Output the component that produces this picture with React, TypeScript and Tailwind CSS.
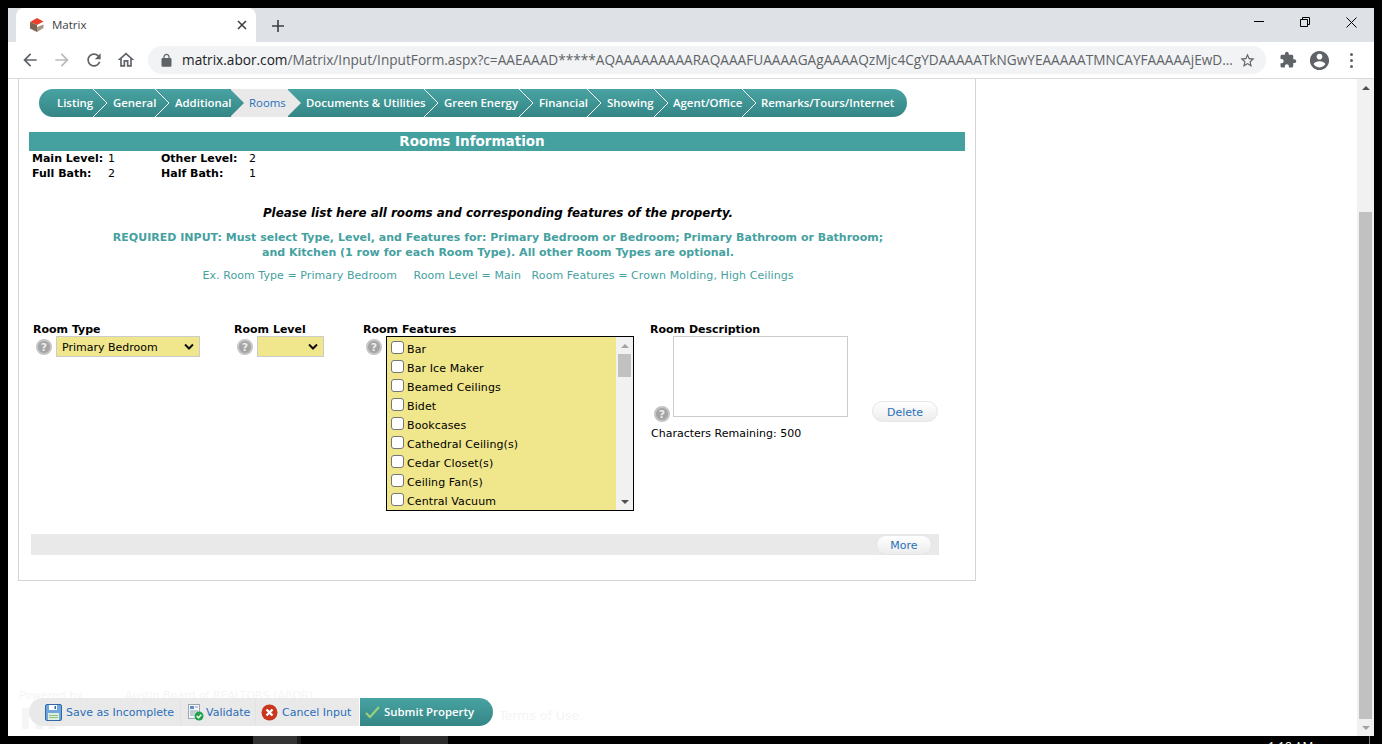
import React from "react";

const steps = [
  { label: "Listing", w: "w-[55px] pl-[18px]", first: true },
  { label: "General", w: "w-[62px] pl-[19px]" },
  { label: "Additional", w: "w-[75px] pl-[19px]" },
  { label: "Rooms", w: "w-[57px] pl-[18px] font-normal", active: true },
  { label: "Documents & Utilities", w: "w-[137px] pl-[18px]" },
  { label: "Green Energy", w: "w-[95px] pl-[19px]" },
  { label: "Financial", w: "w-[68px] pl-[19px]" },
  { label: "Showing", w: "w-[67px] pl-[19px]" },
  { label: "Agent/Office", w: "w-[88px] pl-[18px]" },
  { label: "Remarks/Tours/Internet", w: "w-[164px] pl-[18px]", last: true },
];

const features = [
  "Bar",
  "Bar Ice Maker",
  "Beamed Ceilings",
  "Bidet",
  "Bookcases",
  "Cathedral Ceiling(s)",
  "Cedar Closet(s)",
  "Ceiling Fan(s)",
  "Central Vacuum",
];

const Help = () => (
  <span className="flex h-4 w-4 flex-none items-center justify-center rounded-full border-2 border-[#c4c4c4] bg-[#a4a4a4] text-[11px] leading-none font-bold text-[#ececec]">
    ?
  </span>
);

const Arrow = () => (
  <svg width="12" height="8" viewBox="0 0 12 8" className="flex-none">
    <path d="M2 1.5 6 5.5 10 1.5" fill="none" stroke="#111" strokeWidth="2" />
  </svg>
);

const Icon = ({ d, size = 24, fill = "#5f6368" }: { d: string; size?: number; fill?: string }) => (
  <svg width={size} height={size} viewBox="0 0 24 24" className="flex-none">
    <path d={d} fill={fill} />
  </svg>
);

// point of a step, sits over the start of the next step
const Chevron = ({ active, outline }: { active?: boolean; outline?: boolean }) => (
  <svg width="15" height="28" viewBox="0 0 15 28" className="absolute top-0 -right-[14px] z-10">
    <defs>
      <linearGradient id="stepFill" x1="0" y1="0" x2="0" y2="1">
        <stop offset="0" stopColor="#48a3a2" />
        <stop offset="1" stopColor="#348685" />
      </linearGradient>
    </defs>
    <path d="M0 0 14 14 0 28Z" fill={active ? "#e9e9e9" : "url(#stepFill)"} />
    {outline && <path d="M0 0 14 14 0 28" fill="none" stroke="#ffffff" strokeWidth="1" />}
  </svg>
);

const Steps = () => (
  <div className="ml-[10px] flex h-7 w-[868px] font-['Open_Sans',sans-serif] text-[11.4px] font-semibold">
    {steps.map((s, i) => {
      const next = steps[i + 1];
      return (
        <div
          key={s.label}
          className={`relative flex h-7 flex-none items-center whitespace-nowrap ${s.w} ${
            s.active
              ? "bg-[#e9e9e9] text-[#2a6ebb]"
              : "bg-gradient-to-b from-[#48a3a2] to-[#348685] text-white"
          } ${s.first ? "rounded-l-full" : ""} ${s.last ? "rounded-r-full" : ""}`}
        >
          <span className="relative z-20">{s.label}</span>
          {s.active && <Chevron active />}
          {next?.active && <Chevron />}
          {!s.active && !next?.active && !s.last && <Chevron outline />}
        </div>
      );
    })}
  </div>
);

const PillButton = ({ label, className }: { label: string; className: string }) => (
  <button
    className={`flex items-center justify-center rounded-full border border-[#e6e6e6] bg-gradient-to-b from-white to-[#ececec] text-[11px] text-[#2a6ebb] ${className}`}
  >
    {label}
  </button>
);

const RoomForm = () => (
  <div className="mt-[41px] flex text-[11px] leading-none text-black">
    <div className="ml-[4px] w-[201px]">
      <div className="h-[12px] font-bold">Room Type</div>
      <div className="flex items-center gap-1 pl-[3px]">
        <div className="mt-[1px]">
          <Help />
        </div>
        <div className="flex h-[21px] w-[144px] items-center justify-between border border-[#cccccc] bg-[#f0e68c] pr-[4px] pl-[5px]">
          <span className="pt-[1px]">Primary Bedroom</span>
          <Arrow />
        </div>
      </div>
    </div>
    <div className="w-[129px]">
      <div className="h-[12px] font-bold">Room Level</div>
      <div className="flex items-center gap-1 pl-[3px]">
        <div className="mt-[1px]">
          <Help />
        </div>
        <div className="flex h-[21px] w-[67px] items-center justify-end border border-[#cccccc] bg-[#f0e68c] pr-[4px]">
          <Arrow />
        </div>
      </div>
    </div>
    <div className="w-[287px]">
      <div className="h-[12px] font-bold">Room Features</div>
      <div className="flex items-start gap-1 pl-[3px]">
        <div className="mt-[3px]">
          <Help />
        </div>
        <div className="flex h-[175px] w-[248px] border border-black bg-[#f0e68c]">
          <div className="flex-1 pt-[3px] pl-[4px]">
            {features.map((f) => (
              <div key={f} className="flex h-[19px] items-center">
                <span className="mb-[4px] h-[13px] w-[13px] flex-none rounded-[3px] border border-[#767676] bg-white" />
                <span className="ml-[3px] tracking-[0.1px]">{f}</span>
              </div>
            ))}
          </div>
          <div className="relative w-[17px] bg-[#f1f1f1]">
            <div className="flex h-[17px] items-center justify-center">
              <div className="h-0 w-0 border-x-[4px] border-b-[4px] border-x-transparent border-b-[#a3a3a3]" />
            </div>
            <div className="mx-[2px] h-[23px] bg-[#c1c1c1]" />
            <div className="absolute bottom-0 flex h-[17px] w-full items-center justify-center">
              <div className="h-0 w-0 border-x-[4px] border-t-[4px] border-x-transparent border-t-[#505050]" />
            </div>
          </div>
        </div>
      </div>
    </div>
    <div className="relative w-[288px]">
      <div className="h-[12px] font-bold">Room Description</div>
      <div className="flex items-end">
        <div className="mb-[-5px] ml-[4px] w-[19px]">
          <Help />
        </div>
        <div className="h-[81px] w-[175px] border border-[#cccccc] bg-white" />
        <PillButton label="Delete" className="mb-[-5px] ml-[24px] h-[21px] w-[66px] pt-[1px]" />
      </div>
      <div className="mt-[11px] ml-[1px]">Characters Remaining: 500</div>
    </div>
  </div>
);

const Panel = () => (
  <div className="ml-[10px] h-[502px] w-[958px] border-x border-b border-[#d5d5d5] pt-[10px] pl-[10px] font-['DejaVu_Sans',sans-serif]">
    <Steps />
    <div className="mt-[15px] flex h-[19px] w-[936px] items-center justify-center bg-[#45a1a0] pr-[50px] text-[13.5px] font-bold text-white">
      Rooms Information
    </div>
    <div className="ml-[3px] grid w-[260px] grid-cols-[76px_53px_88px_1fr] text-[11px] leading-[15px] text-black">
      <span className="font-bold">Main Level:</span>
      <span>1</span>
      <span className="font-bold">Other Level:</span>
      <span>2</span>
      <span className="font-bold">Full Bath:</span>
      <span>2</span>
      <span className="font-bold">Half Bath:</span>
      <span>1</span>
    </div>
    <div className="mt-[24px] w-[938px] text-center">
      <p className="text-[11.9px] leading-[16px] font-bold text-black italic">
        Please list here all rooms and corresponding features of the property.
      </p>
      <p className="mt-[9px] text-[11px] leading-[15px] font-bold tracking-[0.01px] text-[#45a1a0]">
        REQUIRED INPUT: Must select Type, Level, and Features for: Primary Bedroom or Bedroom; Primary Bathroom or Bathroom;
        <br />
        and Kitchen (1 row for each Room Type). All other Room Types are optional.
      </p>
      <p className="mt-[8px] text-[11px] leading-[15px] tracking-[0.07px] whitespace-pre text-[#45a1a0]">
        {"Ex. Room Type = Primary Bedroom    "}
        <span className="ml-[2px]">{"Room Level = Main   Room Features = Crown Molding, High Ceilings"}</span>
      </p>
    </div>
    <RoomForm />
    <div className="mt-[23px] ml-[2px] flex h-[21px] w-[908px] items-start justify-end bg-[#e9e9e9] pt-[1px] pr-[7px]">
      <PillButton label="More" className="h-[20px] w-[56px] pt-[2px]" />
    </div>
  </div>
);

const ActionBar = () => (
  <div className="absolute bottom-[10px] left-[21px] flex h-7 font-['DejaVu_Sans',sans-serif] text-[11px] text-[#2a6ebb]">
    <div className="flex items-center rounded-l-full bg-[#e9e9e9]">
      <div className="flex h-7 w-[152px] items-center gap-[4px] border-r border-[#e2e2e2] pl-[16px]">
        <svg width="17" height="17" viewBox="0 0 17 17" className="flex-none">
          <rect x="0.5" y="0.5" width="16" height="16" rx="1.5" fill="#6fa6dc" stroke="#2f67a8" />
          <rect x="4" y="1" width="8" height="5" fill="#ffffff" />
          <rect x="9.5" y="2" width="1.5" height="3" fill="#2f67a8" />
          <rect x="3" y="9" width="11" height="7" fill="#dfeedd" />
          <rect x="4" y="11" width="9" height="1" fill="#8cc084" />
          <rect x="4" y="13" width="9" height="1" fill="#8cc084" />
        </svg>
        <span className="pt-[2px] whitespace-nowrap">Save as Incomplete</span>
      </div>
      <div className="flex h-7 w-[75px] items-center gap-[2px] border-r border-[#e2e2e2] pl-[6px]">
        <svg width="17" height="18" viewBox="0 0 17 18" className="flex-none">
          <rect x="1.5" y="1.5" width="11" height="14" fill="#f4f6f8" stroke="#9aa7b3" />
          <rect x="3" y="3" width="4" height="3" fill="#5c8fc4" />
          <path d="M8 4h3M3 8h8M3 10h5M3 12h4" stroke="#8fa0b0" />
          <circle cx="12" cy="13" r="4.5" fill="#22a34a" />
          <path d="M9.8 13l1.7 1.7 2.8-3" stroke="#fff" strokeWidth="1.4" fill="none" />
        </svg>
        <span className="pt-[2px]">Validate</span>
      </div>
      <div className="flex h-7 w-[103px] items-center gap-[4px] pl-[5px]">
        <svg width="17" height="17" viewBox="0 0 17 17" className="flex-none">
          <circle cx="8.5" cy="8.5" r="8" fill="#c9371f" />
          <path d="M5.5 5.5l6 6M11.5 5.5l-6 6" stroke="#fff" strokeWidth="2.4" />
        </svg>
        <span className="pt-[2px] whitespace-nowrap">Cancel Input</span>
      </div>
    </div>
    <div className="flex w-[134px] items-center gap-[4px] rounded-r-full border-l border-white bg-gradient-to-b from-[#48a3a2] to-[#348685] pl-[5px] font-['Open_Sans',sans-serif] text-[11.4px] font-semibold text-white">
      <svg width="15" height="13" viewBox="0 0 15 13" className="flex-none">
        <path d="M1 7l4 4 9-10" stroke="#9fd07c" strokeWidth="2" fill="none" />
      </svg>
      <span className="whitespace-nowrap">Submit Property</span>
    </div>
  </div>
);

const Toolbar = () => (
  <div className="flex h-[37px] items-center border-b border-[#d9d9d9] bg-white font-['Open_Sans',sans-serif]">
    <div className="ml-[12px] flex w-[128px] items-center">
      <div className="w-[32px]">
        <Icon size={20} d="M20 11H7.83l5.59-5.59L12 4l-8 8 8 8 1.41-1.41L7.83 13H20v-2z" />
      </div>
      <div className="w-[32px]">
        <Icon size={20} fill="#b8babd" d="M12 4l-1.41 1.41L16.17 11H4v2h12.17l-5.58 5.59L12 20l8-8z" />
      </div>
      <div className="w-[32px]">
        <Icon size={20} d="M17.65 6.35C16.2 4.9 14.21 4 12 4c-4.42 0-7.99 3.58-7.99 8s3.57 8 7.99 8c3.73 0 6.84-2.55 7.73-6h-2.08c-.82 2.33-3.04 4-5.65 4-3.31 0-6-2.69-6-6s2.69-6 6-6c1.66 0 3.14.69 4.22 1.78L13 11h7V4l-2.35 2.35z" />
      </div>
      <Icon size={20} d="M12 5.69l5 4.5V18h-2v-6H9v6H7v-7.81l5-4.5M12 3L2 12h3v8h6v-6h2v6h6v-8h3L12 3z" />
    </div>
    <div className="flex h-7 w-[1118px] items-center rounded-full bg-[#f1f3f4] pr-[10px] pl-[11px]">
      <Icon size={15} d="M18 8h-1V6c0-2.76-2.24-5-5-5S7 3.24 7 6v2H6c-1.1 0-2 .9-2 2v10c0 1.1.9 2 2 2h12c1.1 0 2-.9 2-2V10c0-1.1-.9-2-2-2zM9 6c0-1.66 1.34-3 3-3s3 1.34 3 3v2H9V6z" />
      <span className="ml-[8px] flex-1 overflow-hidden text-[13.65px] whitespace-nowrap text-[#5f6368]">
        <span className="text-[#202124]">matrix.abor.com</span>
        /Matrix/Input/InputForm.aspx?c=AAEAAAD*****AQAAAAAAAAARAQAAAFUAAAAGAgAAAAQzMjc4CgYDAAAAATkNGwYEAAAAATMNCAYFAAAAAjEwD...
      </span>
      <Icon size={17} d="M22 9.24l-7.19-.62L12 2 9.19 8.63 2 9.24l5.46 4.73L5.82 21 12 17.27 18.18 21l-1.63-7.03L22 9.24zM12 15.4l-3.76 2.27 1-4.28-3.32-2.88 4.38-.38L12 6.1l1.71 4.04 4.38.38-3.32 2.88 1 4.28L12 15.4z" />
    </div>
    <div className="ml-[13px] flex items-center">
      <div className="w-[29px]">
        <Icon size={18} d="M20.5 11H19V7c0-1.1-.9-2-2-2h-4V3.5C13 2.12 11.88 1 10.5 1S8 2.12 8 3.5V5H4c-1.1 0-1.99.9-1.99 2v3.8H3.5c1.49 0 2.7 1.21 2.7 2.7s-1.21 2.7-2.7 2.7H2V20c0 1.1.9 2 2 2h3.8v-1.5c0-1.49 1.21-2.7 2.7-2.7 1.49 0 2.7 1.21 2.7 2.7V22H17c1.1 0 2-.9 2-2v-4h1.5c1.38 0 2.5-1.12 2.5-2.5S21.88 11 20.5 11z" />
      </div>
      <div className="w-[32px]">
        <Icon size={23} d="M12 2C6.48 2 2 6.48 2 12s4.48 10 10 10 10-4.48 10-10S17.52 2 12 2zm0 3c1.66 0 3 1.34 3 3s-1.34 3-3 3-3-1.34-3-3 1.34-3 3-3zm0 14.2c-2.5 0-4.71-1.28-6-3.22.03-1.99 4-3.08 6-3.08 1.99 0 5.97 1.09 6 3.08-1.29 1.94-3.5 3.22-6 3.22z" />
      </div>
      <div className="ml-[10px] flex flex-col gap-[3px]">
        <span className="h-[3px] w-[3px] rounded-full bg-[#5f6368]" />
        <span className="h-[3px] w-[3px] rounded-full bg-[#5f6368]" />
        <span className="h-[3px] w-[3px] rounded-full bg-[#5f6368]" />
      </div>
    </div>
  </div>
);

const TabStrip = () => (
  <div className="flex h-[34px] items-end bg-[#dee1e6] font-['Open_Sans',sans-serif]">
    <div className="ml-[8px] flex h-[34px] w-[240px] items-center rounded-t-[8px] bg-white pr-[9px] pl-[13px]">
      <svg width="16" height="16" viewBox="0 0 16 16" className="flex-none">
        <path d="M1 5 8 1l6.5 3.5L8 8Z" fill="#e8402a" />
        <path d="M1 5l7 3v7l-7-3.5Z" fill="#7d6352" />
        <path d="M8 10l6.5-2.5v3.5L8 15Z" fill="#a89786" />
      </svg>
      <span className="ml-[7px] flex-1 text-[11.5px] text-[#3c4043]">Matrix</span>
      <svg width="10" height="10" viewBox="0 0 10 10" className="flex-none">
        <path d="M1 1l8 8M9 1l-8 8" stroke="#3c4043" strokeWidth="1.6" />
      </svg>
    </div>
    <div className="mb-[10px] ml-[16px]">
      <svg width="12" height="12" viewBox="0 0 12 12">
        <path d="M6 0v12M0 6h12" stroke="#3c4043" strokeWidth="1.6" />
      </svg>
    </div>
    <div className="ml-auto flex h-[34px] items-start pt-[9px]">
      <div className="flex w-[46px] justify-center pt-[4px]">
        <div className="h-px w-[10px] bg-black" />
      </div>
      <div className="flex w-[46px] justify-center">
        <svg width="10" height="10" viewBox="0 0 10 10">
          <path d="M0.5 2.5h7v7h-7zM2.5 2.5v-2h7v7h-2" fill="none" stroke="#000" />
        </svg>
      </div>
      <div className="flex w-[46px] justify-center">
        <svg width="11" height="11" viewBox="0 0 11 11">
          <path d="M0.5 0.5l10 10M10.5 0.5l-10 10" stroke="#000" />
        </svg>
      </div>
    </div>
  </div>
);

const PageScrollbar = () => (
  <div className="relative w-[17px] flex-none bg-[#f1f1f1]">
    <div className="flex h-[17px] items-center justify-center">
      <div className="h-0 w-0 border-x-[4px] border-b-[4px] border-x-transparent border-b-[#505050]" />
    </div>
    <div className="absolute top-[133px] right-[2px] bottom-[17px] left-[2px] bg-[#c1c1c1]" />
    <div className="absolute bottom-0 flex h-[17px] w-full items-center justify-center">
      <div className="h-0 w-0 border-x-[4px] border-t-[4px] border-x-transparent border-t-[#a3a3a3]" />
    </div>
  </div>
);

// nearly invisible page footer, the action bar lies over most of it
const Footer = () => (
  <div className="mt-[108px] ml-[11px] font-['DejaVu_Sans',sans-serif] text-[#f5f5f5]">
    <div className="flex h-[14px] items-center text-[11px]">
      <span className="w-[106px]">Powered by</span>
      <span>Austin Board of REALTORS (ABOR)</span>
    </div>
    <div className="flex h-[26px] items-end">
      <span className="w-[480px] text-[38px] leading-[26px] font-bold">m</span>
      <span className="mb-[5px] text-[12.5px] leading-4">Terms of Use.</span>
    </div>
  </div>
);

export default function App() {
  return (
    <div className="relative h-[744px] w-[1382px] overflow-hidden bg-black p-2">
      <div className="flex h-[728px] flex-col">
        <TabStrip />
        <Toolbar />
        <div className="relative flex flex-1 bg-white">
          <div className="flex-1">
            <Panel />
            <Footer />
            <ActionBar />
          </div>
          <PageScrollbar />
        </div>
      </div>
      <div className="absolute top-[736px] left-[253px] h-2 w-[44px] bg-[#333333]" />
      <div className="absolute top-[736px] left-[297px] h-2 w-[4px] bg-[#1a1a1a]" />
      <div className="absolute top-[736px] left-[400px] h-2 w-[48px] bg-[#2b2b2b]" />
      <div className="absolute top-[736px] left-[1369px] h-2 w-px bg-[#777777]" />
      <div className="absolute top-[739px] left-[1268px] font-['Open_Sans',sans-serif] text-[12px] leading-4 text-white">
        1:18 AM
      </div>
    </div>
  );
}
